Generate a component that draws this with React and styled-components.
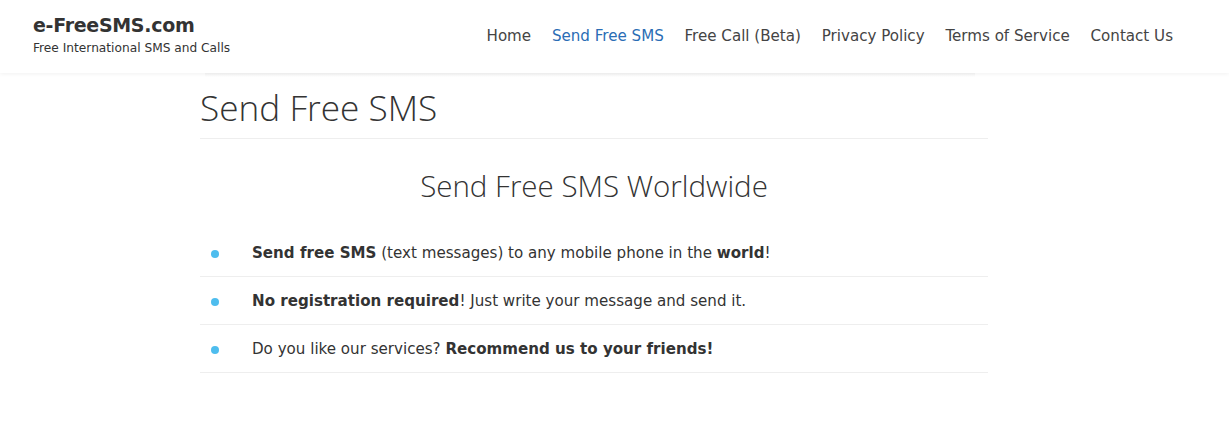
import React from 'react'
import styled, { createGlobalStyle } from "styled-components"

const Global = createGlobalStyle`
  body {
    margin: 0;
    background: #fff;
    font-family: 'DejaVu Sans', Verdana, sans-serif;
    color: #333;
  }
`

const Header = styled.header`
  height: 73px;
  display: flex;
  align-items: center;
  justify-content: space-between;
  padding: 0 56px 0 33px;
  background: #fff;
  box-shadow: 0 1px 4px rgba(0,0,0,0.06);
  position: relative;
`

const Brand = styled.div`
  display: flex;
  flex-direction: column;
  margin-top: -4px;
`

const Logo = styled.div`
  font-size: 19px;
  font-weight: bold;
  color: #333;
  letter-spacing: -0.3px;
`

const Tagline = styled.div`
  font-size: 12.2px;
  color: #333;
  margin-top: 5px;
`

const Nav = styled.nav`
  display: flex;
  gap: 20.8px;
  margin-top: -2px;
`

const NavLink = styled.a`
  font-size: 15.1px;
  color: ${p => p.$active ? '#2a6db5' : '#444'};
  text-decoration: none;
`

const Main = styled.main`
  width: 788px;
  margin: 0 0 0 200px;
`

const TopShade = styled.div`
  height: 4px;
  margin: 0 13px 0 5px;
  background: linear-gradient(#f5f5f5, #fff);
`

const Title = styled.h1`
  font-family: 'Open Sans', sans-serif;
  font-weight: 300;
  font-size: 35.2px;
  color: #333;
  margin: 6px 0 0;
  padding-bottom: 7px;
  border-bottom: 1px solid #eee;
`

const SubTitle = styled.h2`
  font-family: 'Open Sans', sans-serif;
  font-weight: 300;
  font-size: 29.5px;
  color: #333;
  text-align: center;
  margin: 26px 0 23px;
`

const List = styled.ul`
  list-style: none;
  margin: 0;
  padding: 0;
`

const Item = styled.li`
  height: 47px;
  display: flex;
  align-items: center;
  border-bottom: 1px solid #eee;
  font-size: 15.1px;
  color: #333;
`

const Dot = styled.span`
  width: 8px;
  height: 8px;
  border-radius: 50%;
  background: #4ebdee;
  margin: 2px 33px 0 11px;
  flex-shrink: 0;
`

const App = () => {
  const links = ['Home', 'Send Free SMS', 'Free Call (Beta)', 'Privacy Policy', 'Terms of Service', 'Contact Us']
  return (
    <>
      <Global />
      <Header>
        <Brand>
          <Logo>e-FreeSMS.com</Logo>
          <Tagline>Free International SMS and Calls</Tagline>
        </Brand>
        <Nav>
          {links.map(l => (
            <NavLink key={l} href="#" $active={l === 'Send Free SMS'}>{l}</NavLink>
          ))}
        </Nav>
      </Header>
      <Main>
        <TopShade />
        <Title>Send Free SMS</Title>
        <SubTitle>Send Free SMS Worldwide</SubTitle>
        <List>
          <Item><Dot /><span><b>Send free SMS</b> (text messages) to any mobile phone in the <b>world</b>!</span></Item>
          <Item><Dot /><span><b>No registration required</b>! Just write your message and send it.</span></Item>
          <Item><Dot /><span>Do you like our services? <b>Recommend us to your friends!</b></span></Item>
        </List>
      </Main>
    </>
  )
}

export default App
